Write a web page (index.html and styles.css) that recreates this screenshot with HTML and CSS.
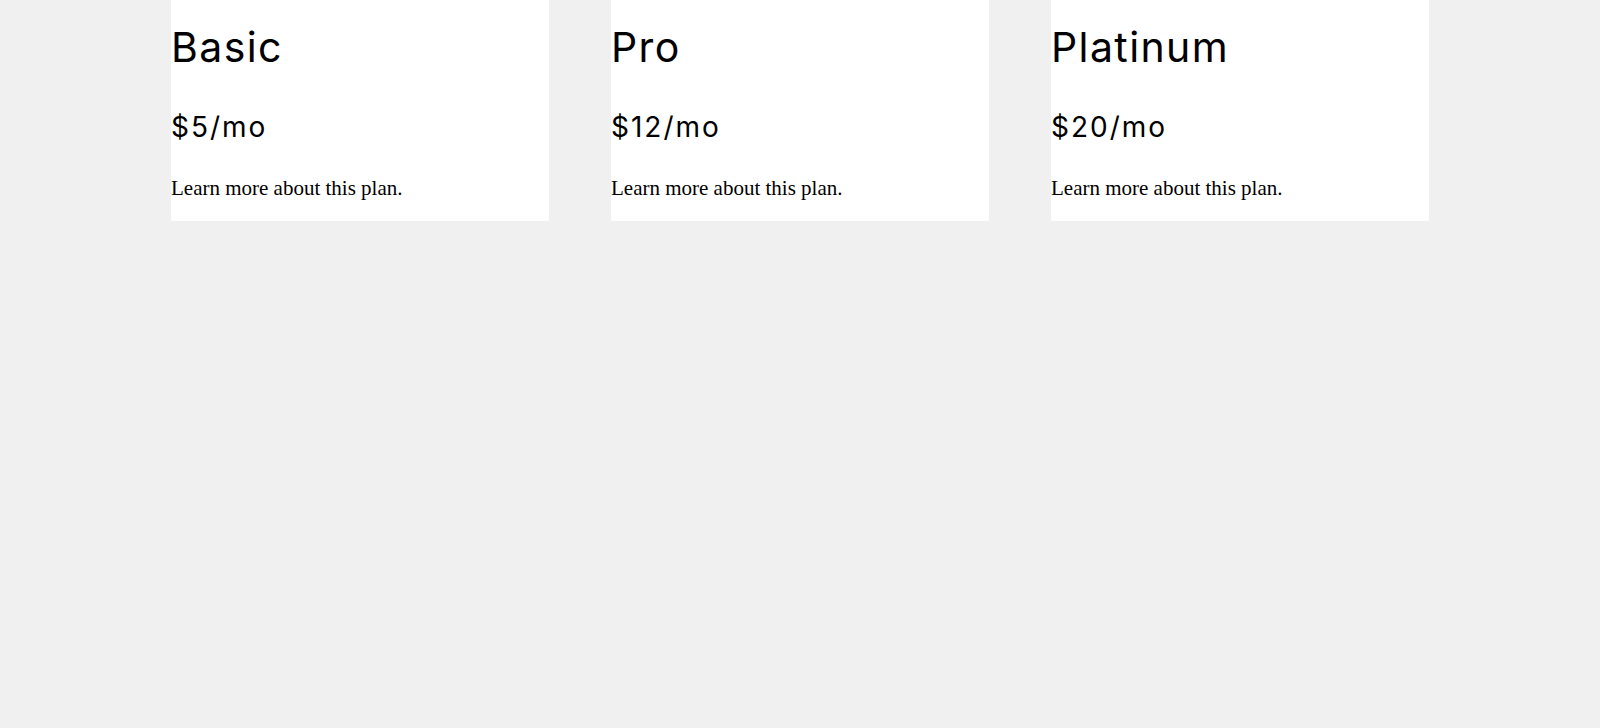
FILE: index.html
```html
<!DOCTYPE html>
<html lang="en">
<head>
<meta charset="utf-8">
<title>Plans</title>
<link rel="stylesheet" href="styles.css">
</head>
<body>
<main class="plans">
  <section class="card">
    <h1 class="card-title">Basic</h1>
    <h2 class="card-price">$5/mo</h2>
    <p class="card-text">Learn more about this plan.</p>
  </section>
  <section class="card">
    <h1 class="card-title">Pro</h1>
    <h2 class="card-price">$12/mo</h2>
    <p class="card-text">Learn more about this plan.</p>
  </section>
  <section class="card">
    <h1 class="card-title">Platinum</h1>
    <h2 class="card-price">$20/mo</h2>
    <p class="card-text">Learn more about this plan.</p>
  </section>
</main>
</body>
</html>
```

FILE: styles.css
```css
html, body {
  margin: 0;
  padding: 0;
  background: #f0f0f0;
}

body {
  font-family: "Liberation Serif", "Times New Roman", serif;
  color: #000;
}

.plans {
  width: 1258px;
  margin: 0 auto;
  display: grid;
  grid-template-columns: repeat(3, 1fr);
  column-gap: 62px;
  align-items: start;
}

.card {
  background: #fff;
  display: flex;
  flex-direction: column;
  padding: 22px 0 21px;
}

.card-title {
  font-family: Inter, Roboto, sans-serif;
  font-weight: 400;
  font-size: 41px;
  line-height: 50px;
  letter-spacing: 1.4px;
  margin: 0;
}

.card-price {
  font-family: Inter, Roboto, sans-serif;
  font-weight: 400;
  font-size: 28px;
  line-height: 34px;
  letter-spacing: 2px;
  margin: 38px 0 0;
}

.card-text {
  font-size: 21px;
  line-height: 24px;
  margin: 32px 0 0;
}
```
